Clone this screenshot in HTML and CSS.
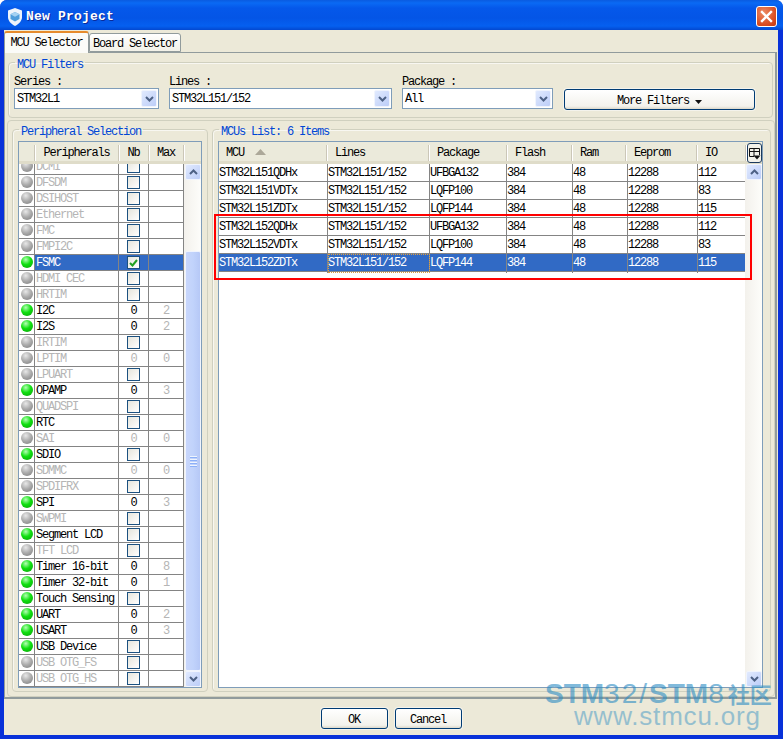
FILE: index.html
```html
<!DOCTYPE html>
<html lang="en">
<head>
<meta charset="utf-8">
<title>New Project</title>
<link rel="stylesheet" href="styles.css">
</head>
<body>
<div class="window">
  <header class="titlebar">
    <svg class="app-icon" width="16" height="18" viewBox="0 0 16 18"><path d="M8 0 15 2.500V9C15 13 12 16 8 18 4 16 1 13 1 9V2.500Z" fill="#eef4fb"/><path d="M8 4 12.500 6.300V11L8 13.500 3.500 11V6.300Z" fill="#4f9ddb"/><path d="M8 4 12.500 6.300 8 8.700 3.500 6.300Z" fill="#a5d2f2"/></svg>
    <span class="title">New Project</span>
    <button class="close" aria-label="Close"><svg width="13" height="13" viewBox="0 0 13 13"><path d="M2 2 11 11M11 2 2 11" stroke="#fff" stroke-width="2.400" stroke-linecap="square"/></svg></button>
  </header>
  <main class="client">
    <nav class="tabs">
      <div class="tab active">MCU Selector</div>
      <div class="tab">Board Selector</div>
    </nav>
    <section class="panel">
      <fieldset class="group filters">
        <legend>MCU Filters</legend>
        <div class="field f-series"><label>Series :</label><div class="combo"><span>STM32L1</span><i class="sb-btn"><svg width="9" height="6" viewBox="0 0 9 6"><path d="M1 1 4.500 4.500 8 1" class="chev"/></svg></i></div></div>
        <div class="field f-lines"><label>Lines :</label><div class="combo"><span>STM32L151/152</span><i class="sb-btn"><svg width="9" height="6" viewBox="0 0 9 6"><path d="M1 1 4.500 4.500 8 1" class="chev"/></svg></i></div></div>
        <div class="field f-package"><label>Package :</label><div class="combo"><span>All</span><i class="sb-btn"><svg width="9" height="6" viewBox="0 0 9 6"><path d="M1 1 4.500 4.500 8 1" class="chev"/></svg></i></div></div>
        <button class="btn more">More Filters <svg width="7" height="4" viewBox="0 0 7 4"><path d="M0 0H7L3.500 4Z" fill="#111"/></svg></button>
      </fieldset>
      <div class="outer">
        <fieldset class="group periph">
          <legend>Peripheral Selection</legend>
          <div class="listbox">
            <div class="lb-head p-cols">
              <div></div><div>Peripherals</div><div>Nb</div><div>Max</div>
            </div>
            <div class="lb-body">
              <div class="lb-rows">
                <div class="list-shift">
                  <div class="prow off"><b class="led"></b><span>DCMI</span><em><u class="cb"></u></em><em></em></div>
                  <div class="prow off"><b class="led"></b><span>DFSDM</span><em><u class="cb"></u></em><em></em></div>
                  <div class="prow off"><b class="led"></b><span>DSIHOST</span><em><u class="cb"></u></em><em></em></div>
                  <div class="prow off"><b class="led"></b><span>Ethernet</span><em><u class="cb"></u></em><em></em></div>
                  <div class="prow off"><b class="led"></b><span>FMC</span><em><u class="cb"></u></em><em></em></div>
                  <div class="prow off"><b class="led"></b><span>FMPI2C</span><em><u class="cb"></u></em><em></em></div>
                  <div class="prow on sel"><b class="led"></b><span>FSMC</span><em><u class="cb"><svg width="9" height="8" viewBox="0 0 9 8"><path d="M1 4 3.500 6.500 8 1" fill="none" stroke="#21a121" stroke-width="2"/></svg></u></em><em></em></div>
                  <div class="prow off"><b class="led"></b><span>HDMI CEC</span><em><u class="cb"></u></em><em></em></div>
                  <div class="prow off"><b class="led"></b><span>HRTIM</span><em><u class="cb"></u></em><em></em></div>
                  <div class="prow on"><b class="led"></b><span>I2C</span><em>0</em><em class="mx">2</em></div>
                  <div class="prow on"><b class="led"></b><span>I2S</span><em>0</em><em class="mx">2</em></div>
                  <div class="prow off"><b class="led"></b><span>IRTIM</span><em><u class="cb"></u></em><em></em></div>
                  <div class="prow off"><b class="led"></b><span>LPTIM</span><em>0</em><em class="mx">0</em></div>
                  <div class="prow off"><b class="led"></b><span>LPUART</span><em><u class="cb"></u></em><em></em></div>
                  <div class="prow on"><b class="led"></b><span>OPAMP</span><em>0</em><em class="mx">3</em></div>
                  <div class="prow off"><b class="led"></b><span>QUADSPI</span><em><u class="cb"></u></em><em></em></div>
                  <div class="prow on"><b class="led"></b><span>RTC</span><em><u class="cb"></u></em><em></em></div>
                  <div class="prow off"><b class="led"></b><span>SAI</span><em>0</em><em class="mx">0</em></div>
                  <div class="prow on"><b class="led"></b><span>SDIO</span><em><u class="cb"></u></em><em></em></div>
                  <div class="prow off"><b class="led"></b><span>SDMMC</span><em>0</em><em class="mx">0</em></div>
                  <div class="prow off"><b class="led"></b><span>SPDIFRX</span><em><u class="cb"></u></em><em></em></div>
                  <div class="prow on"><b class="led"></b><span>SPI</span><em>0</em><em class="mx">3</em></div>
                  <div class="prow off"><b class="led"></b><span>SWPMI</span><em><u class="cb"></u></em><em></em></div>
                  <div class="prow on"><b class="led"></b><span>Segment LCD</span><em><u class="cb"></u></em><em></em></div>
                  <div class="prow off"><b class="led"></b><span>TFT LCD</span><em><u class="cb"></u></em><em></em></div>
                  <div class="prow on"><b class="led"></b><span>Timer 16-bit</span><em>0</em><em class="mx">8</em></div>
                  <div class="prow on"><b class="led"></b><span>Timer 32-bit</span><em>0</em><em class="mx">1</em></div>
                  <div class="prow on"><b class="led"></b><span>Touch Sensing</span><em><u class="cb"></u></em><em></em></div>
                  <div class="prow on"><b class="led"></b><span>UART</span><em>0</em><em class="mx">2</em></div>
                  <div class="prow on"><b class="led"></b><span>USART</span><em>0</em><em class="mx">3</em></div>
                  <div class="prow on"><b class="led"></b><span>USB Device</span><em><u class="cb"></u></em><em></em></div>
                  <div class="prow off"><b class="led"></b><span>USB OTG_FS</span><em><u class="cb"></u></em><em></em></div>
                  <div class="prow off"><b class="led"></b><span>USB OTG_HS</span><em><u class="cb"></u></em><em></em></div>
                </div>
              </div>
              <div class="vbar">
                <i class="sb-btn"><svg width="9" height="6" viewBox="0 0 9 6"><path d="M1 5 4.500 1.500 8 5" class="chev"/></svg></i>
                <div class="track-top"></div>
                <div class="thumb"><s></s><s></s><s></s><s></s></div>
                <i class="sb-btn"><svg width="9" height="6" viewBox="0 0 9 6"><path d="M1 1 4.500 4.500 8 1" class="chev"/></svg></i>
              </div>
            </div>
          </div>
        </fieldset>
        <fieldset class="group mcus">
          <legend>MCUs List: 6 Items</legend>
          <div class="listbox">
            <div class="lb-head m-head">
              <div class="m-cols">
                <div class="sorted">MCU <svg width="11" height="6" viewBox="0 0 11 6"><path d="M5.500 0 11 6H0Z" fill="#aca899"/></svg></div><div>Lines</div><div>Package</div><div>Flash</div><div>Ram</div><div>Eeprom</div><div>IO</div>
              </div>
              <button class="col-pick" aria-label="Choose columns"><svg width="13" height="13" viewBox="0 0 13 13"><path d="M1.500 1.500H11.500V8M1.500 1.500V9.500H6M1.500 4.500H11.500M6 1.500V9.500" fill="none" stroke="#111"/><path d="M5.500 8.500H12.500L9 12.500Z" fill="#111"/></svg></button>
            </div>
            <div class="lb-body">
              <div class="lb-rows">
                <div class="mrow"><span>STM32L151QDHx</span><span>STM32L151/152</span><span>UFBGA132</span><span>384</span><span>48</span><span>12288</span><span>112</span></div>
                <div class="mrow"><span>STM32L151VDTx</span><span>STM32L151/152</span><span>LQFP100</span><span>384</span><span>48</span><span>12288</span><span>83</span></div>
                <div class="mrow"><span>STM32L151ZDTx</span><span>STM32L151/152</span><span>LQFP144</span><span>384</span><span>48</span><span>12288</span><span>115</span></div>
                <div class="mrow"><span>STM32L152QDHx</span><span>STM32L151/152</span><span>UFBGA132</span><span>384</span><span>48</span><span>12288</span><span>112</span></div>
                <div class="mrow"><span>STM32L152VDTx</span><span>STM32L151/152</span><span>LQFP100</span><span>384</span><span>48</span><span>12288</span><span>83</span></div>
                <div class="mrow sel"><span>STM32L152ZDTx</span><span class="focus">STM32L151/152</span><span>LQFP144</span><span>384</span><span>48</span><span>12288</span><span>115</span></div>
              </div>
              <div class="vbar">
                <i class="sb-btn"><svg width="9" height="6" viewBox="0 0 9 6"><path d="M1 5 4.500 1.500 8 5" class="chev"/></svg></i>
                <div class="track-full"></div>
                <i class="sb-btn"><svg width="9" height="6" viewBox="0 0 9 6"><path d="M1 1 4.500 4.500 8 1" class="chev"/></svg></i>
              </div>
            </div>
          </div>
          <div class="highlight"></div>
        </fieldset>
      </div>
    </section>
    <footer class="footer">
      <button class="btn action">OK</button>
      <button class="btn action">Cancel</button>
    </footer>
  </main>
  <div class="watermark">
    <div class="wm-top"><b>STM</b><span class="wm-num">32/</span><b>STM</b><span class="wm-num">8</span><b class="cjk">社区</b></div>
    <div class="wm-url">www.stmcu.org</div>
  </div>
</div>
</body>
</html>
```
FILE: styles.css
```css
* { box-sizing: border-box; }
html, body { margin: 0; padding: 0; }
body { width: 783px; height: 739px; overflow: hidden; font: 12px/14px "Liberation Mono", "Noto Sans CJK SC", monospace; letter-spacing: -1.2px; color: #000; }
.window { position: relative; width: 783px; height: 739px; display: flex; flex-direction: column; background: #0831d9; padding: 0 5px 4px 4px; border-radius: 7px 7px 0 0; }
.titlebar { height: 30px; margin: 0 -5px 0 -4px; padding: 3px 6px 0 7px; display: flex; align-items: center; flex: none; border-radius: 7px 7px 0 0; background: linear-gradient(#0a5be0 0, #0a6af4 3px, #0558ea 8px, #0455e6 18px, #0560f0 26px, #0348d0 30px); }
.app-icon { flex: none; margin-right: 3px; }
.title { font-size: 13px; font-weight: bold; letter-spacing: 0.2px; color: #fff; text-shadow: 1px 1px #0a2a9a; flex: 1; }
.close { width: 21px; height: 21px; padding: 0; border: 1px solid #fff; border-radius: 3px; background: radial-gradient(circle at 35% 30%, #ec8a63, #d8491d 70%, #c03a12); display: flex; align-items: center; justify-content: center; }
.client { flex: 1; min-height: 0; background: #ece9d8; display: flex; flex-direction: column; padding-top: 1px; }
.tabs { display: flex; height: 21px; flex: none; align-items: flex-start; position: relative; z-index: 1; }
.tab { height: 19px; width: 92px; margin-top: 2px; text-align: center; line-height: 21px; border: 1px solid #919b9c; border-radius: 3px 3px 0 0; background: linear-gradient(#fff, #f2f1e8); }
.tab.active { height: 22px; width: 85px; margin-top: 0; border-top: 2px solid #e68b2c; border-bottom: none; background: #fbfbf8; line-height: 20px; }
.panel { width: 773px; height: 647px; flex: none; border: 1px solid #919b9c; border-bottom-width: 2px; border-right-width: 2px; background: #ece9d8; padding: 1px 0 0 2px; display: flex; flex-direction: column; }
fieldset.group { margin: 0; padding: 0; min-width: 0; border: 1px solid #d0d0bf; border-radius: 4px; box-shadow: inset 1px 1px #f8f7f1; }
legend { height: 16px; padding: 4px 2px 0; margin-left: 1px; color: #0046d5; line-height: 14px; }
.filters { margin: 0 2px 0 1px !important; display: flex; padding: 4px 0 7px 5px !important; flex: none; }
.field { display: flex; flex-direction: column; }
.field label { height: 14px; line-height: 16px; }
.f-series { width: 155px; }
.f-lines { width: 233px; }
.f-package { width: 162px; }
.combo { height: 21px; border: 1px solid #7f9db9; background: #fff; display: flex; align-items: center; padding: 0 1px 0 2px; }
.f-series .combo { width: 145px; }
.f-lines .combo { width: 223px; }
.f-package .combo { width: 151px; }
.combo span { flex: 1; padding-top: 1px; }
.combo .sb-btn { height: 17px; }
.sb-btn { width: 16px; height: 16px; flex: none; display: flex; align-items: center; justify-content: center; border: 1px solid #f0f4fd; border-radius: 2px; background: linear-gradient(135deg, #e1eafe, #bccdf8); }
.chev { fill: none; stroke: #4d6185; stroke-width: 2; }
.btn { font: inherit; letter-spacing: inherit; color: #000; border: 1px solid #003c74; border-radius: 3px; background: linear-gradient(#fff, #f3f2ec 85%, #dcd8ca); padding: 2px 0 0; box-shadow: 0 0 0 1px #f4f3ec; }
.more { width: 191px; height: 21px; margin-top: 15px; }
.outer { flex: 1; min-height: 0; margin-top: 2px; border: 1px solid #d0d0bf; border-radius: 4px; padding: 0 3px 4px 4px; display: flex; gap: 4px; }
.periph { width: 196px; flex: none; padding: 0 5px 4px 5px !important; }
.mcus { flex: 1; min-width: 0; padding: 0 7px 4px 5px !important; position: relative; }
.listbox { height: 547px; margin-top: 4px; border: 1px solid #7f9db9; background: #fff; display: flex; flex-direction: column; }
.lb-head { height: 22px; flex: none; background: #ebeadb; border-bottom: 3px solid #dfdcc9; }
.p-cols { display: grid; grid-template-columns: 16px 84px 30px 35px; }
.m-head { display: flex; }
.m-cols { width: 527px; flex: none; display: grid; grid-template-columns: 108px 102px 78px 65px 54px 71px 49px; }
.p-cols > div, .m-cols > div { height: 16px; margin-top: 3px; line-height: 16px; border-right: 1px solid #cbc7b8; box-shadow: 1px 0 #fff; }
.p-cols > div { text-align: center; }
.m-cols > div { padding-left: 8px; white-space: nowrap; }
.m-cols .sorted { padding-left: 7px; }
.sorted svg { margin-left: 5px; vertical-align: 1px; }
.col-pick { width: 15px; height: 20px; margin: 1px 0 0 1px; padding: 0; border: 1px solid #1c3b5e; border-radius: 3px; background: #f3f2ea; display: flex; align-items: center; justify-content: center; }
.lb-body { flex: 1; min-height: 0; display: flex; }
.lb-rows { flex: 1; min-width: 0; overflow: hidden; }
.list-shift { margin-top: -5px; }
.prow { height: 16px; display: grid; grid-template-columns: 16px 84px 30px 35px; border-bottom: 1px solid #848484; }
.prow > * { border-right: 1px solid #848484; font-style: normal; font-weight: normal; line-height: 17px; }
.prow span { padding-left: 1px; white-space: nowrap; overflow: hidden; }
.prow em { display: flex; align-items: center; justify-content: center; }
.prow .mx { color: #b5b5b5; }
.off { color: #b5b5b5; }
.led { display: flex; align-items: flex-start; justify-content: center; padding-top: 1px; }
.led::before { content: ""; width: 12px; height: 12px; border-radius: 50%; background: radial-gradient(circle at 40% 30%, #e8e8e8, #aaa 50%, #7a7a7a); }
.on .led::before { background: radial-gradient(circle at 40% 30%, #b4ffb4, #10e010 45%, #0a9a0a); }
.cb { width: 13px; height: 13px; border: 1px solid #1c5180; background: linear-gradient(135deg, #e6e5dc, #fff); display: flex; align-items: center; justify-content: center; text-decoration: none; }
.sel { background: #316ac5; color: #fff; }
.sel .led { background: #fff; }
.vbar { width: 17px; flex: none; padding-left: 1px; display: flex; flex-direction: column; background: linear-gradient(90deg, #f3f1ec, #fdfdfa); }
.track-top { height: 71px; flex: none; }
.track-full { flex: 1; }
.thumb { flex: 1; border: 1px solid #f0f4fd; border-radius: 2px; background: linear-gradient(90deg, #c8d6fb, #c1d3fb 50%, #b6c8f6); display: flex; flex-direction: column; align-items: center; justify-content: center; gap: 1px; }
.thumb s { width: 7px; height: 1px; background: #eef4fe; box-shadow: 0 1px #8cb0f8; margin-bottom: 1px; }
.mrow { height: 18px; display: grid; grid-template-columns: 109px 102px 77px 66px 55px 70px 48px; width: 527px; border-bottom: 1px solid #848484; }
.mrow span { border-right: 1px solid #848484; line-height: 19px; }
.mrow .focus { outline: 1px dotted #e0a040; outline-offset: -1px; }
.highlight { position: absolute; left: 1px; top: 77px; width: 538px; height: 66px; border: 2px solid #f00; pointer-events: none; }
.footer { flex: 1; min-height: 0; display: flex; justify-content: center; align-items: flex-start; gap: 7px; padding-top: 9px; }
.action { width: 67px; height: 21px; }
.watermark { position: absolute; left: 545px; top: 681px; width: 236px; color: #2e8dc4; opacity: 0.6; pointer-events: none; font-family: "Liberation Sans", "Noto Sans CJK SC", sans-serif; letter-spacing: 0; }
.wm-top { font-size: 28px; line-height: 25px; white-space: nowrap; }
.wm-num { letter-spacing: 2px; }
.cjk { font-size: 22px; margin-left: 2px; }
.wm-url { font-size: 26px; line-height: 16px; letter-spacing: 0.8px; margin-left: 29px; white-space: nowrap; opacity: 0.75; }
```
